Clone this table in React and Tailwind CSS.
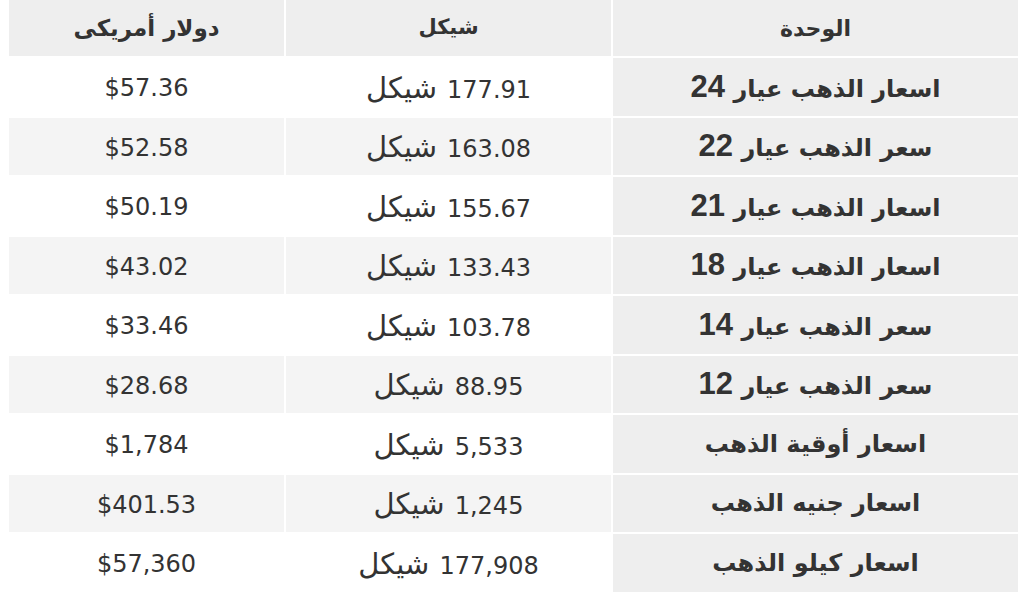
const ROWS = [
  { unit: 'اسعار الذهب عيار', num: '24', ils: '177.91', usd: '$57.36' },
  { unit: 'سعر الذهب عيار', num: '22', ils: '163.08', usd: '$52.58' },
  { unit: 'اسعار الذهب عيار', num: '21', ils: '155.67', usd: '$50.19' },
  { unit: 'اسعار الذهب عيار', num: '18', ils: '133.43', usd: '$43.02' },
  { unit: 'سعر الذهب عيار', num: '14', ils: '103.78', usd: '$33.46' },
  { unit: 'سعر الذهب عيار', num: '12', ils: '88.95', usd: '$28.68' },
  { unit: 'اسعار أوقية الذهب', ils: '5,533', usd: '$1,784' },
  { unit: 'اسعار جنيه الذهب', ils: '1,245', usd: '$401.53' },
  { unit: 'اسعار كيلو الذهب', ils: '177,908', usd: '$57,360' },
];

export default function App() {
  return (
    <div
      dir="rtl"
      className="w-[1018px] h-[593px] overflow-hidden bg-white pl-[9px] text-[#333]"
      style={{ fontFamily: '"DejaVu Sans", sans-serif' }}
    >
      <div className="grid grid-cols-[1fr_325px_275px] gap-[2px]">
        {/* header */}
        <div className="h-[56px] bg-[#eeeeee] flex items-center justify-center text-[22px] font-bold">
          الوحدة
        </div>
        <div className="h-[56px] bg-[#eeeeee] flex items-center justify-center text-[21px] font-bold">
          شيكل
        </div>
        <div className="h-[56px] bg-[#eeeeee] flex items-center justify-center text-[23px] font-bold">
          دولار أمريكى
        </div>

        {ROWS.map((r, i) => {
          const bg = i % 2 === 1 ? 'bg-[#f4f4f4]' : 'bg-white';
          return [
            <div
              key={`u${i}`}
              className="h-[57.5px] bg-[#eeeeee] flex items-center justify-center font-bold"
            >
              <span className="text-[24px]">
                {r.unit}
                {r.num && (
                  <>
                    {' '}
                    <span className="text-[31px] font-['Liberation_Sans']">{r.num}</span>
                  </>
                )}
              </span>
            </div>,
            <div
              key={`s${i}`}
              className={`h-[57.5px] ${bg} flex items-center justify-center pt-[3px]`}
            >
              <span>
                <span className="text-[24px] ml-[5px]">{r.ils}</span>{' '}
                <span className="text-[29px]">شيكل</span>
              </span>
            </div>,
            <div
              key={`d${i}`}
              className={`h-[57.5px] ${bg} flex items-center justify-center pt-[3px] text-[24px]`}
            >
              <span dir="ltr">{r.usd}</span>
            </div>,
          ];
        })}
      </div>
    </div>
  );
}
